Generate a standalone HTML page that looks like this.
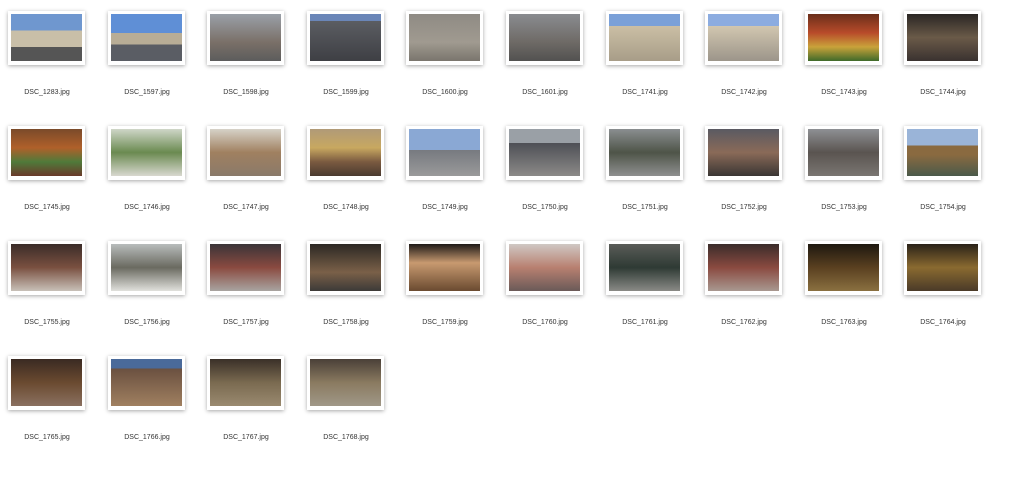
<!DOCTYPE html><html><head><style>
body{margin:0;width:1024px;height:501px;background:#fff;position:relative;overflow:hidden;font-family:"Liberation Sans",sans-serif}
.t{position:absolute;width:77px;height:54px;background:#fff;box-shadow:0 1px 4px rgba(0,0,0,.35)}
.t i{position:absolute;left:3px;top:3px;right:3px;bottom:4px}
.l{position:absolute;width:100px;text-align:center;font-size:7px;color:#333}
</style></head><body>
<script>
const names=["1283","1597","1598","1599","1600","1601","1741","1742","1743","1744","1745","1746","1747","1748","1749","1750","1751","1752","1753","1754","1755","1756","1757","1758","1759","1760","1761","1762","1763","1764","1765","1766","1767","1768"];
const g=[
"#6f97cf 0 35%,#c9bfa8 35% 70%,#555 70%","#5f8fd6 0 40%,#b8ad96 40% 65%,#5a5d64 65%","#9aa0a8,#7a7068 60%,#5c5c5c","#6a86b8 0 15%,#5b5d62 15%,#3e3f44","#8f8b84,#a09a90 60%,#7a756d","#8a8c90,#6e6a66 60%,#525150",
"#7aa0d8 0 25%,#cbbfa5 25%,#a89d88","#8cace0 0 25%,#d2c7b0 25%,#9c958a","#6a2e1a,#b84b2a 40%,#c9a23a 70%,#3f6a2a","#2a2624,#6a5a48 50%,#3a3230",
"#7a4a2a,#b0602a 40%,#4f7a3a 70%,#6a3a2a","#cfd6c8,#6a8a50 50%,#d8d8cf","#d6d2c8,#a08060 50%,#8a7a6a","#b09a78,#c8a860 40%,#7a5a40 70%,#4a3a30",
"#8aa8d4 0 45%,#777a80 45%,#9a9a9a","#9aa0a6 0 30%,#4e5056 30%,#8c8a88","#8a8e90,#4e5448 50%,#8f9090","#5a5a62,#8a6a58 50%,#3a3634","#8e9094,#5a5450 50%,#7a7672","#9ab4d8 0 35%,#8a6a40 35% 55%,#4a5a4a",
"#3a2c28,#7a5040 50%,#c8c0b8","#b8bcbc,#6a6a60 50%,#e0e0dc","#3a3438,#8a4a40 50%,#a8a4a0","#2c2824,#7a6048 60%,#3c3a38","#1e1a18,#c89a70 40%,#6a4a30","#d0c8c4,#b88070 50%,#6a5a58",
"#5a5c58,#2e3a34 50%,#8a8a86","#3a2c2a,#8a4a40 50%,#a89890","#1e1810,#5a4020 50%,#8a7040","#2a2218,#8a6a30 50%,#4a3a28",
"#3a2a22,#6a4a30 50%,#8a7060","#4a6a9a 0 20%,#6a5040 20%,#a08060","#3a3028,#7a6a50 50%,#9a8a70","#4a4038,#8a7a60 50%,#a09888"];
const xs=[8,108,207,307,406,506,606,705,805,904];
let h="";
names.forEach((n,k)=>{const r=Math.floor(k/10),c=k%10;const x=xs[c],y=11+r*115;
h+=`<div class="t" style="left:${x}px;top:${y}px"><i style="background:linear-gradient(180deg,${g[k]})"></i></div><div class="l" style="left:${x-11}px;top:${y+78}px">DSC_${n}.jpg</div>`;});
document.write(h);
</script>
</body></html>
